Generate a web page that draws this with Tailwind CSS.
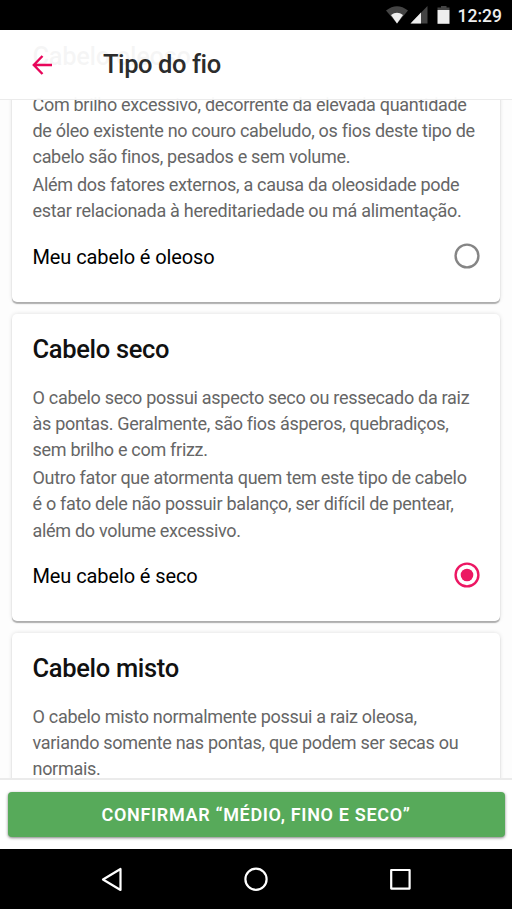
<!DOCTYPE html>
<html lang="pt-BR">
<head>
<meta charset="utf-8">
<meta name="viewport" content="width=device-width, initial-scale=1">
<title>Tipo do fio</title>
<script src="https://cdn.jsdelivr.net/npm/@tailwindcss/browser@4"></script>
</head>
<body class="font-['Roboto',sans-serif] bg-[#fdfdfd]">
<div class="flex h-[909px] w-[512px] flex-col overflow-hidden">
  <div class="z-20 flex h-[30px] shrink-0 items-center justify-end bg-black pr-[10px] text-white">
    <svg class="h-[30px] w-[70px]" viewBox="384.500 0 70 30">
      <path d="M385.500 10.500Q396.500 2 407.500 10.500L396.500 23.500Z" fill="#444"/>
      <path d="M390.500 15Q396.500 10.500 402.500 15L396.500 23.500Z" fill="#eee"/>
      <path d="M427 6V23.500H410Z" fill="#444"/>
      <path d="M420.500 12.500V23.500H410Z" fill="#eee"/>
      <path d="M437 10V7.500H440.500V6H446V7.500H449V10Z" fill="#444"/>
      <path d="M437 10H449V23.800H437Z" fill="#eee"/>
    </svg>
    <span class="ml-[3px] mt-[3px] text-[17.500px] font-medium leading-none text-[#eee]">12:29</span>
  </div>

  <main class="relative min-h-0 flex-1 overflow-hidden">
    <header class="absolute inset-x-0 top-0 z-10 flex h-[70px] items-center border-b border-[#ebebeb] bg-white/96 pl-[32px]">
      <svg class="h-[20px] w-[20px]" viewBox="0 0 20 20" fill="none" stroke="#e8065a" stroke-width="2.400"><path d="M10.500 1L1.800 10L10.500 19M2 10H20"/></svg>
      <h1 class="ml-[51px] text-[25.500px] font-medium tracking-[-0.420px] text-[#2c2c2c]">Tipo do fio</h1>
    </header>

    <div class="-mt-[9px] flex flex-col gap-[12px] px-[12px]">
      <section class="h-[281px] shrink-0 rounded-[5px] bg-white pl-[20.500px] pr-[20px] pt-[18px] shadow-[0_2px_1px_rgba(0,0,0,0.28),0_0_4px_rgba(0,0,0,0.13)]">
        <h2 class="text-[25.500px] font-medium leading-[34px] tracking-[-0.320px] text-[#111]">Cabelo oleoso</h2>
        <div class="mt-[19px] flex flex-col gap-[1.500px] whitespace-nowrap text-[18px] leading-[26.200px] tracking-[-0.295px] text-[#666]">
          <p>Com brilho excessivo, decorrente da elevada quantidade<br>de óleo existente no couro cabeludo, os fios deste tipo de<br>cabelo são finos, pesados e sem volume.</p>
          <p>Além dos fatores externos, a causa da oleosidade pode<br>estar relacionada à hereditariedade ou má alimentação.</p>
        </div>
        <label class="mt-[19.500px] flex h-[26px] items-center justify-between text-[20px] tracking-[-0.100px] text-black"><span>Meu cabelo é oleoso</span><svg class="-mt-[2px] h-[26px] w-[26px]" viewBox="0 0 26 26"><circle cx="13" cy="13" r="11.400" fill="none" stroke="#858585" stroke-width="2.400"/></svg></label>
      </section>

      <section class="h-[307px] shrink-0 rounded-[5px] bg-white pl-[20.500px] pr-[20px] pt-[18px] shadow-[0_2px_1px_rgba(0,0,0,0.28),0_0_4px_rgba(0,0,0,0.13)]">
        <h2 class="text-[25.500px] font-medium leading-[34px] tracking-[-0.320px] text-[#111]">Cabelo seco</h2>
        <div class="mt-[19px] flex flex-col gap-[1.500px] whitespace-nowrap text-[18px] leading-[26.200px] tracking-[-0.295px] text-[#666]">
          <p>O cabelo seco possui aspecto seco ou ressecado da raiz<br>às pontas. Geralmente, são fios ásperos, quebradiços,<br>sem brilho e com frizz.</p>
          <p>Outro fator que atormenta quem tem este tipo de cabelo<br>é o fato dele não possuir balanço, ser difícil de pentear,<br>além do volume excessivo.</p>
        </div>
        <label class="mt-[19.500px] flex h-[26px] items-center justify-between text-[20px] tracking-[-0.100px] text-black"><span>Meu cabelo é seco</span><svg class="-mt-[2px] h-[26px] w-[26px]" viewBox="0 0 26 26"><circle cx="13" cy="13" r="11.400" fill="none" stroke="#ec1763" stroke-width="2.400"/><circle cx="13" cy="13" r="6.300" fill="#ec1763"/></svg></label>
      </section>

      <section class="h-[307px] shrink-0 rounded-[5px] bg-white pl-[20.500px] pr-[20px] pt-[18px] shadow-[0_2px_1px_rgba(0,0,0,0.28),0_0_4px_rgba(0,0,0,0.13)]">
        <h2 class="text-[25.500px] font-medium leading-[34px] tracking-[-0.320px] text-[#111]">Cabelo misto</h2>
        <p class="mt-[19px] whitespace-nowrap text-[18px] leading-[26.200px] tracking-[-0.295px] text-[#666]">O cabelo misto normalmente possui a raiz oleosa,<br>variando somente nas pontas, que podem ser secas ou<br>normais.</p>
      </section>
    </div>
  </main>

  <footer class="h-[71px] shrink-0 border-t-2 border-[#ebebeb] bg-white px-[7.500px] pt-[12px]">
    <button class="block h-[45px] w-full rounded-[4px] bg-[#57aa5a] text-[18px] font-semibold tracking-[0.670px] text-white shadow-[0_1px_3px_rgba(0,0,0,0.5)]">CONFIRMAR “MÉDIO, FINO E SECO”</button>
  </footer>

  <nav class="flex h-[60px] shrink-0 items-center justify-center bg-black">
    <svg class="h-[60px] w-[512px]" viewBox="0 849 512 60" fill="none" stroke="#fff" stroke-width="2.200" stroke-linejoin="round">
      <path d="M120.500 869V890L103 879.500Z"/>
      <circle cx="256" cy="879.300" r="10.600"/>
      <rect x="391.200" y="870" width="18.400" height="18.600"/>
    </svg>
  </nav>
</div>
</body>
</html>
